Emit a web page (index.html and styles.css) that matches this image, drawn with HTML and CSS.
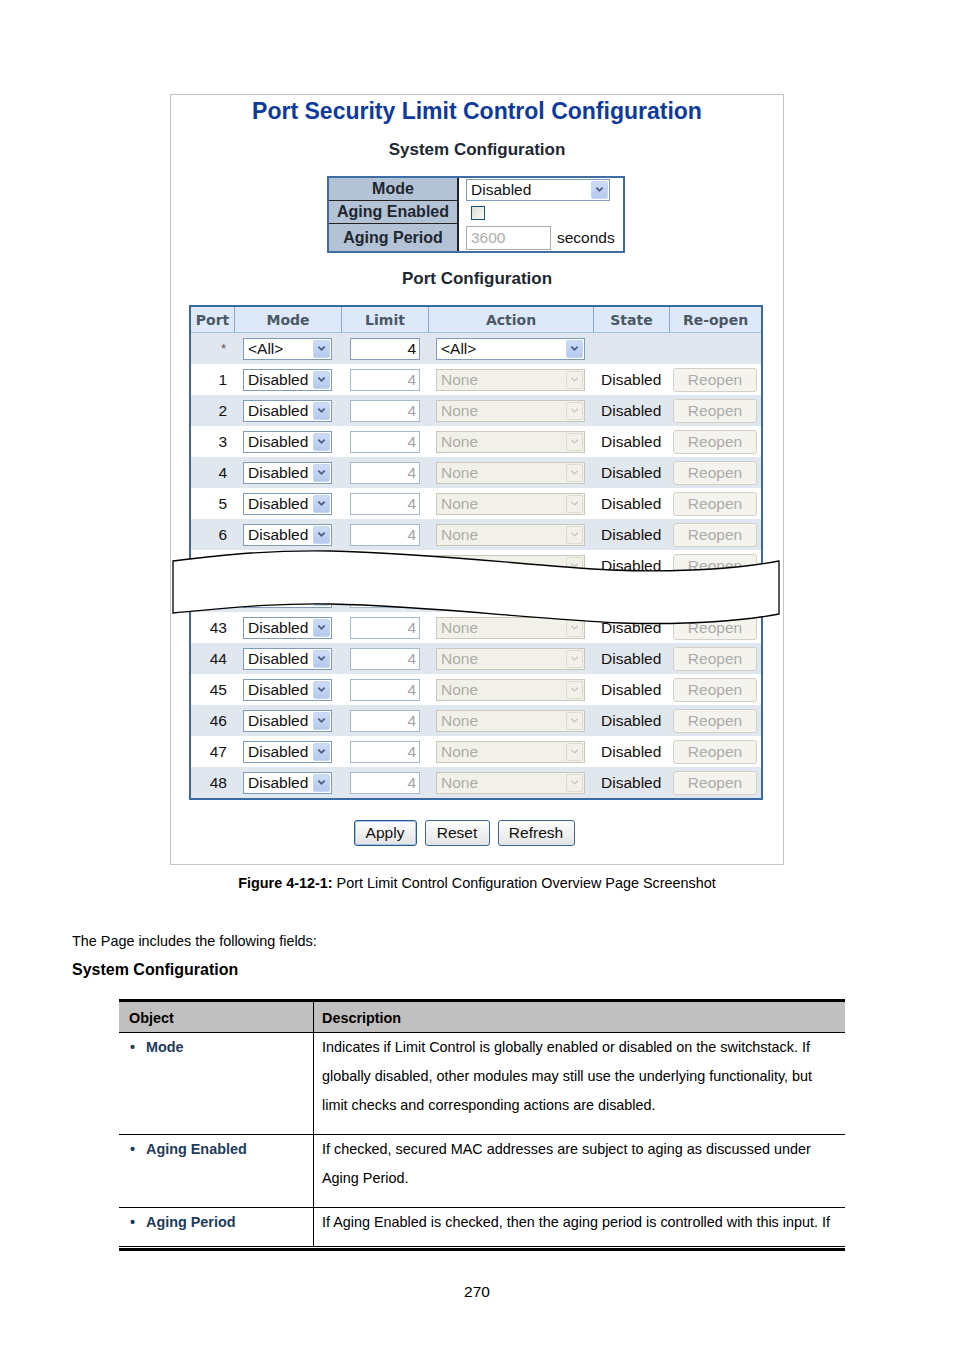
FILE: index.html
```html
<!DOCTYPE html>
<html>
<head>
<meta charset="utf-8">
<title>Port Security Limit Control Configuration</title>
<link rel="stylesheet" href="styles.css">
</head>
<body>
<div class="page">
  <div class="shot">
    <h1 class="title">Port Security Limit Control Configuration</h1>
    <h2 class="sub">System Configuration</h2>
    <div class="sys">
      <div class="sys-label">Mode</div>
      <div class="sys-val"><div class="sel s"><span>Disabled</span><i class="arr"><svg viewBox="0 0 10 7"><path d="M1.5 1.5L5 5L8.5 1.5"/></svg></i></div></div>
      <div class="sys-label">Aging Enabled</div>
      <div class="sys-val"><span class="chk"></span></div>
      <div class="sys-label last">Aging Period</div>
      <div class="sys-val"><div class="period">3600</div><span class="secs">seconds</span></div>
    </div>
    <h2 class="sub pc">Port Configuration</h2>
    <div class="ports">
      <div class="row hd"><div>Port</div><div>Mode</div><div>Limit</div><div>Action</div><div>State</div><div>Re-open</div></div>
      <div class="row sh"><div class="c-port star">*</div><div class="c-mode"><div class="sel m"><span>&lt;All&gt;</span><i class="arr"><svg viewBox="0 0 10 7"><path d="M1.5 1.5L5 5L8.5 1.5"/></svg></i></div></div><div class="c-lim"><div class="lim">4</div></div><div class="c-act"><div class="sel a"><span>&lt;All&gt;</span><i class="arr"><svg viewBox="0 0 10 7"><path d="M1.5 1.5L5 5L8.5 1.5"/></svg></i></div></div><div class="c-state"></div><div class="c-re"></div></div>
      <div class="row"><div class="c-port">1</div><div class="c-mode"><div class="sel m"><span>Disabled</span><i class="arr"><svg viewBox="0 0 10 7"><path d="M1.5 1.5L5 5L8.5 1.5"/></svg></i></div></div><div class="c-lim"><div class="lim dis">4</div></div><div class="c-act"><div class="sel a dis"><span>None</span><i class="arr"><svg viewBox="0 0 10 7"><path d="M1.5 1.5L5 5L8.5 1.5"/></svg></i></div></div><div class="c-state">Disabled</div><div class="c-re"><div class="rbtn">Reopen</div></div></div>
      <div class="row sh"><div class="c-port">2</div><div class="c-mode"><div class="sel m"><span>Disabled</span><i class="arr"><svg viewBox="0 0 10 7"><path d="M1.5 1.5L5 5L8.5 1.5"/></svg></i></div></div><div class="c-lim"><div class="lim dis">4</div></div><div class="c-act"><div class="sel a dis"><span>None</span><i class="arr"><svg viewBox="0 0 10 7"><path d="M1.5 1.5L5 5L8.5 1.5"/></svg></i></div></div><div class="c-state">Disabled</div><div class="c-re"><div class="rbtn">Reopen</div></div></div>
      <div class="row"><div class="c-port">3</div><div class="c-mode"><div class="sel m"><span>Disabled</span><i class="arr"><svg viewBox="0 0 10 7"><path d="M1.5 1.5L5 5L8.5 1.5"/></svg></i></div></div><div class="c-lim"><div class="lim dis">4</div></div><div class="c-act"><div class="sel a dis"><span>None</span><i class="arr"><svg viewBox="0 0 10 7"><path d="M1.5 1.5L5 5L8.5 1.5"/></svg></i></div></div><div class="c-state">Disabled</div><div class="c-re"><div class="rbtn">Reopen</div></div></div>
      <div class="row sh"><div class="c-port">4</div><div class="c-mode"><div class="sel m"><span>Disabled</span><i class="arr"><svg viewBox="0 0 10 7"><path d="M1.5 1.5L5 5L8.5 1.5"/></svg></i></div></div><div class="c-lim"><div class="lim dis">4</div></div><div class="c-act"><div class="sel a dis"><span>None</span><i class="arr"><svg viewBox="0 0 10 7"><path d="M1.5 1.5L5 5L8.5 1.5"/></svg></i></div></div><div class="c-state">Disabled</div><div class="c-re"><div class="rbtn">Reopen</div></div></div>
      <div class="row"><div class="c-port">5</div><div class="c-mode"><div class="sel m"><span>Disabled</span><i class="arr"><svg viewBox="0 0 10 7"><path d="M1.5 1.5L5 5L8.5 1.5"/></svg></i></div></div><div class="c-lim"><div class="lim dis">4</div></div><div class="c-act"><div class="sel a dis"><span>None</span><i class="arr"><svg viewBox="0 0 10 7"><path d="M1.5 1.5L5 5L8.5 1.5"/></svg></i></div></div><div class="c-state">Disabled</div><div class="c-re"><div class="rbtn">Reopen</div></div></div>
      <div class="row sh"><div class="c-port">6</div><div class="c-mode"><div class="sel m"><span>Disabled</span><i class="arr"><svg viewBox="0 0 10 7"><path d="M1.5 1.5L5 5L8.5 1.5"/></svg></i></div></div><div class="c-lim"><div class="lim dis">4</div></div><div class="c-act"><div class="sel a dis"><span>None</span><i class="arr"><svg viewBox="0 0 10 7"><path d="M1.5 1.5L5 5L8.5 1.5"/></svg></i></div></div><div class="c-state">Disabled</div><div class="c-re"><div class="rbtn">Reopen</div></div></div>
      <div class="row"><div class="c-port">7</div><div class="c-mode"><div class="sel m"><span>Disabled</span><i class="arr"><svg viewBox="0 0 10 7"><path d="M1.5 1.5L5 5L8.5 1.5"/></svg></i></div></div><div class="c-lim"><div class="lim dis">4</div></div><div class="c-act"><div class="sel a dis"><span>None</span><i class="arr"><svg viewBox="0 0 10 7"><path d="M1.5 1.5L5 5L8.5 1.5"/></svg></i></div></div><div class="c-state">Disabled</div><div class="c-re"><div class="rbtn">Reopen</div></div></div>
      <div class="row sh"><div class="c-port">42</div><div class="c-mode"><div class="sel m"><span>Disabled</span><i class="arr"><svg viewBox="0 0 10 7"><path d="M1.5 1.5L5 5L8.5 1.5"/></svg></i></div></div><div class="c-lim"><div class="lim dis">4</div></div><div class="c-act"><div class="sel a dis"><span>None</span><i class="arr"><svg viewBox="0 0 10 7"><path d="M1.5 1.5L5 5L8.5 1.5"/></svg></i></div></div><div class="c-state">Disabled</div><div class="c-re"><div class="rbtn">Reopen</div></div></div>
      <div class="row"><div class="c-port">43</div><div class="c-mode"><div class="sel m"><span>Disabled</span><i class="arr"><svg viewBox="0 0 10 7"><path d="M1.5 1.5L5 5L8.5 1.5"/></svg></i></div></div><div class="c-lim"><div class="lim dis">4</div></div><div class="c-act"><div class="sel a dis"><span>None</span><i class="arr"><svg viewBox="0 0 10 7"><path d="M1.5 1.5L5 5L8.5 1.5"/></svg></i></div></div><div class="c-state">Disabled</div><div class="c-re"><div class="rbtn">Reopen</div></div></div>
      <div class="row sh"><div class="c-port">44</div><div class="c-mode"><div class="sel m"><span>Disabled</span><i class="arr"><svg viewBox="0 0 10 7"><path d="M1.5 1.5L5 5L8.5 1.5"/></svg></i></div></div><div class="c-lim"><div class="lim dis">4</div></div><div class="c-act"><div class="sel a dis"><span>None</span><i class="arr"><svg viewBox="0 0 10 7"><path d="M1.5 1.5L5 5L8.5 1.5"/></svg></i></div></div><div class="c-state">Disabled</div><div class="c-re"><div class="rbtn">Reopen</div></div></div>
      <div class="row"><div class="c-port">45</div><div class="c-mode"><div class="sel m"><span>Disabled</span><i class="arr"><svg viewBox="0 0 10 7"><path d="M1.5 1.5L5 5L8.5 1.5"/></svg></i></div></div><div class="c-lim"><div class="lim dis">4</div></div><div class="c-act"><div class="sel a dis"><span>None</span><i class="arr"><svg viewBox="0 0 10 7"><path d="M1.5 1.5L5 5L8.5 1.5"/></svg></i></div></div><div class="c-state">Disabled</div><div class="c-re"><div class="rbtn">Reopen</div></div></div>
      <div class="row sh"><div class="c-port">46</div><div class="c-mode"><div class="sel m"><span>Disabled</span><i class="arr"><svg viewBox="0 0 10 7"><path d="M1.5 1.5L5 5L8.5 1.5"/></svg></i></div></div><div class="c-lim"><div class="lim dis">4</div></div><div class="c-act"><div class="sel a dis"><span>None</span><i class="arr"><svg viewBox="0 0 10 7"><path d="M1.5 1.5L5 5L8.5 1.5"/></svg></i></div></div><div class="c-state">Disabled</div><div class="c-re"><div class="rbtn">Reopen</div></div></div>
      <div class="row"><div class="c-port">47</div><div class="c-mode"><div class="sel m"><span>Disabled</span><i class="arr"><svg viewBox="0 0 10 7"><path d="M1.5 1.5L5 5L8.5 1.5"/></svg></i></div></div><div class="c-lim"><div class="lim dis">4</div></div><div class="c-act"><div class="sel a dis"><span>None</span><i class="arr"><svg viewBox="0 0 10 7"><path d="M1.5 1.5L5 5L8.5 1.5"/></svg></i></div></div><div class="c-state">Disabled</div><div class="c-re"><div class="rbtn">Reopen</div></div></div>
      <div class="row sh"><div class="c-port">48</div><div class="c-mode"><div class="sel m"><span>Disabled</span><i class="arr"><svg viewBox="0 0 10 7"><path d="M1.5 1.5L5 5L8.5 1.5"/></svg></i></div></div><div class="c-lim"><div class="lim dis">4</div></div><div class="c-act"><div class="sel a dis"><span>None</span><i class="arr"><svg viewBox="0 0 10 7"><path d="M1.5 1.5L5 5L8.5 1.5"/></svg></i></div></div><div class="c-state">Disabled</div><div class="c-re"><div class="rbtn">Reopen</div></div></div>
    </div>
    <div class="buttons">
      <div class="btn apply">Apply</div>
      <div class="btn reset">Reset</div>
      <div class="btn refresh">Refresh</div>
    </div>
    <svg class="wave" viewBox="0 0 612 82" width="612" height="82">
      <path d="M2,15 C60,8 100,4 160,5 C260,7 360,20 440,24 C520,27 570,22 608,15 L608,68 C570,75 520,79 450,77 C360,73 260,60 160,58 C100,57 60,62 2,67 Z" fill="#fff" stroke="#000" stroke-width="1.3"/>
    </svg>
  </div>
  <p class="caption"><b>Figure 4-12-1:</b> Port Limit Control Configuration Overview Page Screenshot</p>
  <p class="intro">The Page includes the following fields:</p>
  <h3 class="sec">System Configuration</h3>
  <table class="desc">
    <thead>
      <tr><th class="obj">Object</th><th class="dsc">Description</th></tr>
    </thead>
    <tbody>
      <tr>
        <td class="obj"><span class="bul">•</span>Mode</td>
        <td class="dsc">Indicates if Limit Control is globally enabled or disabled on the switchstack. If<br>globally disabled, other modules may still use the underlying functionality, but<br>limit checks and corresponding actions are disabled.</td>
      </tr>
      <tr>
        <td class="obj"><span class="bul">•</span>Aging Enabled</td>
        <td class="dsc">If checked, secured MAC addresses are subject to aging as discussed under<br>Aging Period.</td>
      </tr>
      <tr class="lastrow">
        <td class="obj"><span class="bul">•</span>Aging Period</td>
        <td class="dsc">If Aging Enabled is checked, then the aging period is controlled with this input. If</td>
      </tr>
    </tbody>
  </table>
  <div class="endrule"></div>
  <div class="pagenum">270</div>
</div>
</body>
</html>
```
FILE: styles.css
```css
* { box-sizing: border-box; }

body {
  margin: 0;
  background: #fff;
  color: #000;
  font-family: "Liberation Sans", Arial, sans-serif;
}

.page {
  width: 954px;
  min-height: 1350px;
  overflow: hidden;
}

/* ---------- screenshot box ---------- */
.shot {
  position: relative;
  margin: 94px 0 0 170px;
  width: 614px;
  border: 1px solid #c4c4c4;
  padding: 2px 0 18px;
}

.title {
  margin: 0;
  font-size: 23px;
  line-height: 28px;
  font-weight: bold;
  color: #0e3a9e;
  text-align: center;
}

.sub {
  margin: 15px 0 16px;
  font-size: 17px;
  line-height: 20px;
  font-weight: bold;
  color: #1d2731;
  text-align: center;
}
.sub.pc { margin-top: 16px; }

/* ---------- system configuration ---------- */
.sys {
  width: 298px;
  margin: 0 0 0 156px;
  border: 2px solid #3d6da3;
  display: grid;
  grid-template-columns: 130px 1fr;
  grid-template-rows: 23px 23px 27px;
}

.sys-label {
  background: #b3c2d4;
  border-right: 2px solid #222;
  border-bottom: 1px solid #222;
  display: flex;
  align-items: center;
  justify-content: center;
  font-size: 16px;
  font-weight: bold;
  color: #1e2731;
}
.sys-label.last { border-bottom: none; }

.sys-val {
  display: flex;
  align-items: center;
  padding-left: 7px;
  background: #fff;
}

.chk {
  display: block;
  width: 14px;
  height: 14px;
  margin-left: 5px;
  border: 1px solid #1c5180;
  background: linear-gradient(135deg, #dcdcd6, #fbfbfa);
}

.period {
  width: 85px;
  height: 24px;
  border: 1px solid #a5acb2;
  color: #adadad;
  font-size: 15.5px;
  line-height: 22px;
  padding-left: 4px;
}

.secs {
  margin-left: 6px;
  font-size: 15.5px;
  color: #111;
}

/* ---------- selects & inputs ---------- */
.sel {
  position: relative;
  height: 22px;
  border: 1px solid #7f9db9;
  background: #fff;
  font-size: 15.5px;
  line-height: 20px;
  padding-left: 4px;
  color: #111;
  white-space: nowrap;
}
.sel.s { width: 144px; }
.sel.m { width: 89px; }
.sel.a { width: 149px; }

.sel .arr {
  position: absolute;
  right: 1px;
  top: 1px;
  width: 17px;
  height: 18px;
  border: 1px solid #c6d5f0;
  border-radius: 2px;
  background: linear-gradient(#cddcf7, #b5c9ee);
  display: flex;
  align-items: center;
  justify-content: center;
}
.arr svg { width: 9px; height: 7px; display: block; }
.arr path { fill: none; stroke: #4a5d82; stroke-width: 2; }

.sel.dis {
  border-color: #c9c7ba;
  background: #f2f1e9;
  color: #adada6;
}
.sel.dis .arr {
  background: #f2f1e9;
  border-color: #dedcd2;
}
.sel.dis .arr path { stroke: #c4c4be; stroke-width: 1.4; }

.lim {
  width: 70px;
  height: 22px;
  border: 1px solid #7f9db9;
  background: #fff;
  text-align: right;
  padding-right: 3px;
  font-size: 15.5px;
  line-height: 20px;
  color: #111;
}
.lim.dis { color: #a3a3a3; border-color: #a7b8cb; }

.rbtn {
  width: 84px;
  height: 24px;
  border: 1px solid #d3d1c7;
  border-radius: 3px;
  background: #f4f3ee;
  color: #acaca8;
  font-size: 15.5px;
  display: flex;
  align-items: center;
  justify-content: center;
}

/* ---------- port table ---------- */
.ports {
  width: 574px;
  margin: 0 0 0 18px;
  border: 2px solid #3a6aa2;
}

.row {
  display: grid;
  grid-template-columns: 44px 107px 87px 165px 76px 91px;
  height: 31px;
  background: #fff;
}
.row.sh { background: #e1e7ef; }

.row.hd {
  height: 26px;
  background: #dde9f8;
}
.row.hd > div {
  border-right: 1px solid #8ba7cc;
  border-bottom: 1px solid #a9bfdc;
  display: flex;
  align-items: center;
  justify-content: center;
  font-family: "DejaVu Sans", Verdana, sans-serif;
  font-weight: bold;
  font-size: 14px;
  color: #4b5866;
}
.row.hd > div:last-child { border-right: none; }

.row > div { display: flex; align-items: center; }

.c-port {
  justify-content: flex-end;
  padding-right: 8px;
  font-size: 15.5px;
  color: #111;
}
.c-port.star { font-size: 13px; color: #555; padding-right: 9px; }
.c-mode { padding-left: 8px; }
.c-lim { padding-left: 8px; }
.c-act { padding-left: 7px; }
.c-state { padding-left: 7px; font-size: 15.5px; color: #111; }
.c-re { padding-left: 3px; }

/* ---------- buttons ---------- */
.buttons {
  display: flex;
  justify-content: center;
  gap: 8px;
  margin-top: 20px;
  padding-right: 26px;
}

.btn {
  height: 26px;
  border: 1px solid #3b6690;
  border-radius: 3px;
  background: linear-gradient(#fefefe, #e3e3e3);
  font-size: 15.5px;
  color: #111;
  display: flex;
  align-items: center;
  justify-content: center;
}
.btn.apply { width: 63px; border-color: #2a5a94; box-shadow: inset 0 0 0 1px #a8c4ec; }
.btn.reset { width: 65px; }
.btn.refresh { width: 77px; }

/* ---------- torn/wave break overlay ---------- */
.wave {
  position: absolute;
  left: 0;
  top: 451px;
  display: block;
}

/* ---------- document text ---------- */
.caption {
  margin: 10px 0 0;
  text-align: center;
  font-size: 14.4px;
  line-height: 17px;
}

.intro {
  margin: 41px 0 0 72px;
  font-size: 14.4px;
  line-height: 17px;
}

.sec {
  margin: 10px 0 0 72px;
  font-size: 16px;
  line-height: 19px;
  font-weight: bold;
}

.desc {
  margin: 20px 0 0 119px;
  width: 726px;
  border-collapse: separate;
  border-spacing: 0;
  border-top: 3px solid #000;
  font-size: 14.4px;
}

.desc th {
  background: #c0c0c0;
  height: 31px;
  padding: 1px 0 0;
  text-align: left;
  font-weight: bold;
  vertical-align: middle;
  border-bottom: 1px solid #000;
}
.desc th.obj { width: 195px; padding-left: 10px; border-right: 1px solid #000; }
.desc th.dsc { padding-left: 8px; }

.desc td {
  vertical-align: top;
  line-height: 29px;
  padding: 0 0 14px;
  border-bottom: 1px solid #000;
  white-space: nowrap;
}
.desc td.obj {
  padding-left: 11px;
  border-right: 1px solid #000;
  font-weight: bold;
  color: #1f3b5c;
}
.desc td.dsc { padding-left: 8px; }
.desc .lastrow td { padding-bottom: 9px; border-bottom: none; }

.bul {
  display: inline-block;
  width: 16px;
  color: #1f3b5c;
}

.endrule {
  margin-left: 119px;
  width: 726px;
  height: 5px;
  border-top: 1px solid #000;
  border-bottom: 3px solid #000;
}

.pagenum {
  margin-top: 32px;
  text-align: center;
  font-size: 15.5px;
  line-height: 18px;
}
```
